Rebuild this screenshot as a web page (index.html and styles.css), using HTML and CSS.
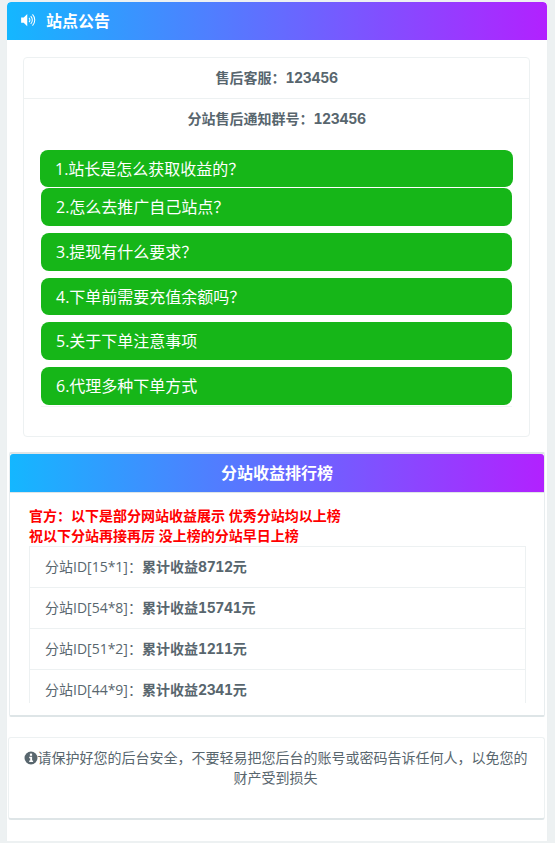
FILE: index.html
```html
<!DOCTYPE html>
<html lang="zh-CN">
<head>
  <meta charset="UTF-8">
  <title>站点公告</title>
  <link rel="stylesheet" href="styles.css">
</head>
<body>

  <div class="wrap">

    <!-- notice -->
    <div class="panel-heading">
      <svg class="sound-icon" viewBox="0 0 18 16" width="16" height="14">
        <path d="M0 5h3l4-4v14l-4-4H0z" fill="#fff"/>
        <path d="M9 5.500a3.500 3.500 0 0 1 0 5M11 3.500a6.500 6.500 0 0 1 0 9M13 1.500a9.500 9.500 0 0 1 0 13" fill="none" stroke="#fff" stroke-width="1.200"/>
      </svg>
      <span>站点公告</span>
    </div>

    <div class="notice-body">
      <div class="notice-box">
        <div class="notice-row">售后客服：<span class="num">123456</span></div>
        <div class="notice-row no-border">分站售后通知群号：<span class="num">123456</span></div>

        <div class="faq">
          <div class="faq-btn first">1.站长是怎么获取收益的？</div>
          <div class="faq-btn">2.怎么去推广自己站点？</div>
          <div class="faq-btn">3.提现有什么要求？</div>
          <div class="faq-btn">4.下单前需要充值余额吗？</div>
          <div class="faq-btn">5.关于下单注意事项</div>
          <div class="faq-btn">6.代理多种下单方式</div>
        </div>
      </div>
    </div>

    <!-- ranking -->
    <div class="rank-panel">
      <div class="rank-heading">分站收益排行榜</div>
      <div class="rank-body">
        <p class="rank-note">官方：以下是部分网站收益展示 优秀分站均以上榜<br>祝以下分站再接再厉 没上榜的分站早日上榜</p>
        <div class="rank-scroll">
          <div class="rank-row">分站ID[15*1]：<b>累计收益<span class="num">8712</span>元</b></div>
          <div class="rank-row">分站ID[54*8]：<b>累计收益<span class="num">15741</span>元</b></div>
          <div class="rank-row">分站ID[51*2]：<b>累计收益<span class="num">1211</span>元</b></div>
          <div class="rank-row">分站ID[44*9]：<b>累计收益<span class="num">2341</span>元</b></div>
        </div>
      </div>
    </div>

    <!-- tip -->
    <div class="tip-panel">
      <svg class="info-icon" viewBox="0 0 14 14" width="14" height="14">
        <circle cx="7" cy="7" r="6.500" fill="#58666e"/>
        <rect x="5.900" y="2.600" width="2.200" height="2.200" fill="#fff"/>
        <path d="M5.200 5.800h2.900v3.800h1v1.400H5.200V9.600h1V7.200h-1z" fill="#fff"/>
      </svg>请保护好您的后台安全，不要轻易把您后台的账号或密码告诉任何人，以免您的财产受到损失
    </div>

  </div>

</body>
</html>
```

FILE: styles.css
```css
body {
  margin: 0;
  background: #edf1f2;
  font-family: "Open Sans", "Noto Sans CJK SC", sans-serif;
  font-size: 14px;
  color: #58666e;
}

.wrap {
  width: 540px;
  height: 839px;
  margin: 2px 0 0 7px;
  background: #fff;
  box-shadow: 0 1px 1px rgba(0,0,0,0.05);
  border-radius: 4px 4px 0 0;
  overflow: hidden;
}

.panel-heading {
  height: 36px;
  padding: 0 0 2px 14px;
  display: flex;
  align-items: center;
  gap: 9px;
  background: linear-gradient(to right, #14b7ff, #b221ff);
  color: #fff;
  font-size: 16px;
  font-weight: bold;
  border-radius: 4px 4px 0 0;
}

.notice-body {
  padding: 17px 17px 0 16px;
}

.notice-box {
  height: 378px;
  border: 1px solid #edf1f2;
  border-radius: 4px;
}

.notice-row {
  height: 40px;
  line-height: 40px;
  text-align: center;
  font-weight: bold;
  border-bottom: 1px solid #edf1f2;
}

.no-border {
  border-bottom: none;
}

.num {
  font-family: Inter, sans-serif;
  font-feature-settings: "tnum";
  letter-spacing: -0.350px;
}

.faq {
  margin: 11px 17px 0 17px;
  padding-bottom: 1px;
  border-bottom: 1px solid #f3f5f6;
}

.faq-btn {
  height: 37.750px;
  line-height: 39px;
  margin-bottom: 7px;
  padding-left: 15px;
  background: #16b618;
  color: #fff;
  font-size: 16px;
  border-radius: 8px;
}

.faq-btn:last-child {
  margin-bottom: 0;
}

.first {
  margin: 0 -1px 1px -1px;
  height: 37px;
}

.rank-panel {
  margin: 15px 2px 0 2px;
  height: 265px;
  border: 1px solid #e8edef;
  border-top: 2px solid #dee5e7;
  border-bottom: 2px solid #dee5e7;
  border-radius: 2px;
  box-sizing: border-box;
}

.rank-heading {
  height: 38px;
  line-height: 38px;
  text-align: center;
  background: linear-gradient(to right, #14b7ff, #b221ff);
  color: #fff;
  font-size: 16px;
  font-weight: bold;
  border-radius: 3px 3px 0 0;
  border-bottom: 1px solid #dee5e7;
}

.rank-body {
  padding: 13px 18px 0 19px;
}

.rank-note {
  margin: 0;
  color: #f00;
  font-weight: bold;
  line-height: 20px;
}

.rank-scroll {
  height: 156px;
  overflow: hidden;
  border: 1px solid #edf1f2;
  border-bottom: none;
}

.rank-row {
  height: 40px;
  line-height: 40px;
  padding-left: 15px;
  border-bottom: 1px solid #edf1f2;
}

.tip-panel {
  margin: 20px 2px 0 1px;
  height: 83px;
  padding: 10px 13px 0 11px;
  box-sizing: border-box;
  text-align: center;
  line-height: 20px;
  border: 1px solid #edf1f2;
  border-bottom: 2px solid #dee5e7;
  border-radius: 3px;
}

.info-icon {
  vertical-align: -2px;
}
```
